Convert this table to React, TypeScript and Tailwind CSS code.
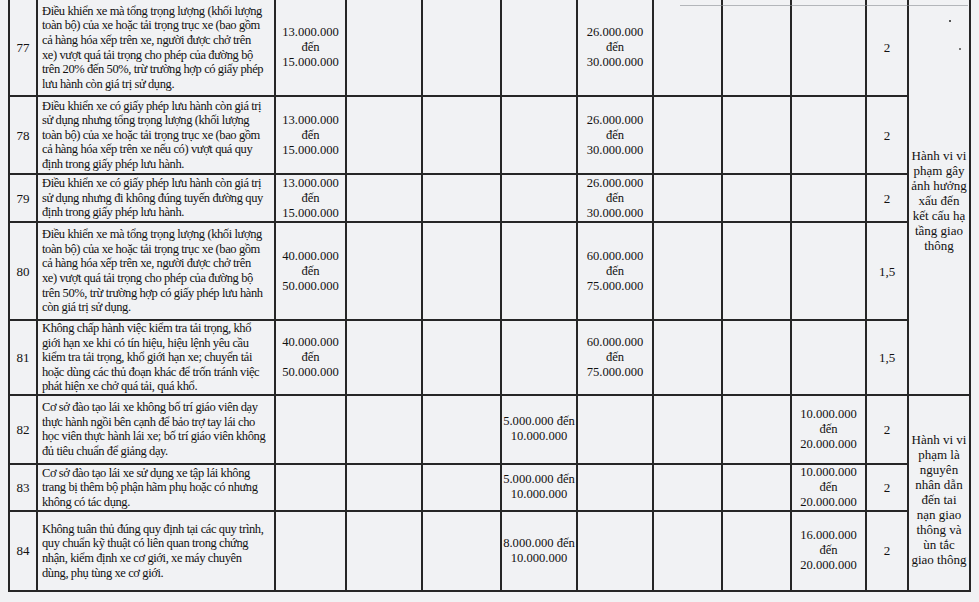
import React from 'react';

type Row = {
  no: string;
  h: number;
  desc: string[];
  c2?: string[];
  c5?: string[];
  c6?: string[];
  c9?: string[];
  k: string;
};

const rows: Row[] = [
  {
    no: '77',
    h: 96,
    desc: [
      'Điều khiển xe mà tổng trọng lượng (khối lượng',
      'toàn bộ) của xe hoặc tải trọng trục xe (bao gồm',
      'cả hàng hóa xếp trên xe, người được chở trên',
      'xe) vượt quá tải trọng cho phép của đường bộ',
      'trên 20% đến 50%, trừ trường hợp có giấy phép',
      'lưu hành còn giá trị sử dụng.',
    ],
    c2: ['13.000.000', 'đến', '15.000.000'],
    c6: ['26.000.000', 'đến', '30.000.000'],
    k: '2',
  },
  {
    no: '78',
    h: 78,
    desc: [
      'Điều khiển xe có giấy phép lưu hành còn giá trị',
      'sử dụng nhưng tổng trọng lượng (khối lượng',
      'toàn bộ) của xe hoặc tải trọng trục xe (bao gồm',
      'cả hàng hóa xếp trên xe nếu có) vượt quá quy',
      'định trong giấy phép lưu hành.',
    ],
    c2: ['13.000.000', 'đến', '15.000.000'],
    c6: ['26.000.000', 'đến', '30.000.000'],
    k: '2',
  },
  {
    no: '79',
    h: 48,
    desc: [
      'Điều khiển xe có giấy phép lưu hành còn giá trị',
      'sử dụng nhưng đi không đúng tuyến đường quy',
      'định trong giấy phép lưu hành.',
    ],
    c2: ['13.000.000', 'đến', '15.000.000'],
    c6: ['26.000.000', 'đến', '30.000.000'],
    k: '2',
  },
  {
    no: '80',
    h: 98,
    desc: [
      'Điều khiển xe mà tổng trọng lượng (khối lượng',
      'toàn bộ) của xe hoặc tải trọng trục xe (bao gồm',
      'cả hàng hóa xếp trên xe, người được chở trên',
      'xe) vượt quá tải trọng cho phép của đường bộ',
      'trên 50%, trừ trường hợp có giấy phép lưu hành',
      'còn giá trị sử dụng.',
    ],
    c2: ['40.000.000', 'đến', '50.000.000'],
    c6: ['60.000.000', 'đến', '75.000.000'],
    k: '1,5',
  },
  {
    no: '81',
    h: 73,
    desc: [
      'Không chấp hành việc kiểm tra tải trọng, khổ',
      'giới hạn xe khi có tín hiệu, hiệu lệnh yêu cầu',
      'kiểm tra tải trọng, khổ giới hạn xe; chuyển tải',
      'hoặc dùng các thủ đoạn khác để trốn tránh việc',
      'phát hiện xe chở quá tải, quá khổ.',
    ],
    c2: ['40.000.000', 'đến', '50.000.000'],
    c6: ['60.000.000', 'đến', '75.000.000'],
    k: '1,5',
  },
  {
    no: '82',
    h: 69,
    desc: [
      'Cơ sở đào tạo lái xe không bố trí giáo viên dạy',
      'thực hành ngồi bên cạnh để bảo trợ tay lái cho',
      'học viên thực hành lái xe; bố trí giáo viên không',
      'đủ tiêu chuẩn để giảng dạy.',
    ],
    c5: ['5.000.000 đến', '10.000.000'],
    c9: ['10.000.000', 'đến', '20.000.000'],
    k: '2',
  },
  {
    no: '83',
    h: 47,
    desc: [
      'Cơ sở đào tạo lái xe sử dụng xe tập lái không',
      'trang bị thêm bộ phận hãm phụ hoặc có nhưng',
      'không có tác dụng.',
    ],
    c5: ['5.000.000 đến', '10.000.000'],
    c9: ['10.000.000', 'đến', '20.000.000'],
    k: '2',
  },
  {
    no: '84',
    h: 80,
    desc: [
      'Không tuân thủ đúng quy định tại các quy trình,',
      'quy chuẩn kỹ thuật có liên quan trong chứng',
      'nhận, kiểm định xe cơ giới, xe máy chuyên',
      'dùng, phụ tùng xe cơ giới.',
    ],
    c5: ['8.000.000 đến', '10.000.000'],
    c9: ['16.000.000', 'đến', '20.000.000'],
    k: '2',
  },
];

const note1 = ['Hành vi vi', 'phạm gây', 'ảnh hưởng', 'xấu đến', 'kết cấu hạ', 'tầng giao', 'thông'];
const note2 = ['Hành vi vi', 'phạm là', 'nguyên', 'nhân dẫn', 'đến tai', 'nạn giao', 'thông và', 'ùn tắc', 'giao thông'];

const cell = 'border-2 border-[#262626] align-middle p-0';

function Lines({ items, desc, tight }: { items?: string[]; desc?: boolean; tight?: boolean }) {
  if (!items) return null;
  return (
    <div
      className={
        desc
          ? 'text-left pl-[4px] text-[12.5px] tracking-[-0.4px] leading-[14.6px]'
          : tight
          ? 'text-center text-[12.6px] leading-[15px]'
          : 'text-center'
      }
    >
      {items.map((t, i) => (
        <div key={i} className="whitespace-nowrap">
          {t}
        </div>
      ))}
    </div>
  );
}

export default function App() {
  return (
    <div
      className="relative w-[979px] h-[602px] overflow-hidden bg-[#f1f2f4] text-[#111] text-[13px] leading-[15px]"
      style={{ fontFamily: '"Liberation Serif", "Times New Roman", serif' }}
    >
      <div className="absolute left-[680px] top-[5px] w-[288px] h-px bg-[#8a8d92] opacity-60" />
      <div className="absolute left-[949px] top-[20px] w-[2px] h-[2px] bg-[#555]" />
      <div className="absolute left-[959px] top-[48px] w-[2px] h-[2px] bg-[#777]" />
      <div className="pl-[8px]">
        <table className="table-fixed border-collapse w-[961px]">
          <colgroup>
            <col className="w-[28px]" />
            <col className="w-[238px]" />
            <col className="w-[71px]" />
            <col className="w-[76px]" />
            <col className="w-[79px]" />
            <col className="w-[76px]" />
            <col className="w-[76px]" />
            <col className="w-[69px]" />
            <col className="w-[69px]" />
            <col className="w-[75px]" />
            <col className="w-[42px]" />
            <col className="w-[62px]" />
          </colgroup>
          <tbody>
            {rows.map((r, i) => {
              const top = i === 0 ? ' border-t-0' : '';
              return (
                <tr key={r.no} style={{ height: r.h }}>
                  <td className={cell + top + ' text-center'}>{r.no}</td>
                  <td className={cell + top}>
                    <Lines items={r.desc} desc />
                  </td>
                  <td className={cell + top}>
                    <Lines items={r.c2} tight />
                  </td>
                  <td className={cell + top} />
                  <td className={cell + top} />
                  <td className={cell + top}>
                    <Lines items={r.c5} tight />
                  </td>
                  <td className={cell + top}>
                    <Lines items={r.c6} tight />
                  </td>
                  <td className={cell + top} />
                  <td className={cell + top} />
                  <td className={cell + top}>
                    <Lines items={r.c9} tight />
                  </td>
                  <td className={cell + top + ' text-center'}>{r.k}</td>
                  {i === 0 && (
                    <td rowSpan={5} className={cell + ' border-t-0 pt-[8px]'}>
                      <Lines items={note1} />
                    </td>
                  )}
                  {i === 5 && (
                    <td rowSpan={3} className={cell + ' pt-[14px]'}>
                      <Lines items={note2} />
                    </td>
                  )}
                </tr>
              );
            })}
          </tbody>
        </table>
      </div>
    </div>
  );
}
